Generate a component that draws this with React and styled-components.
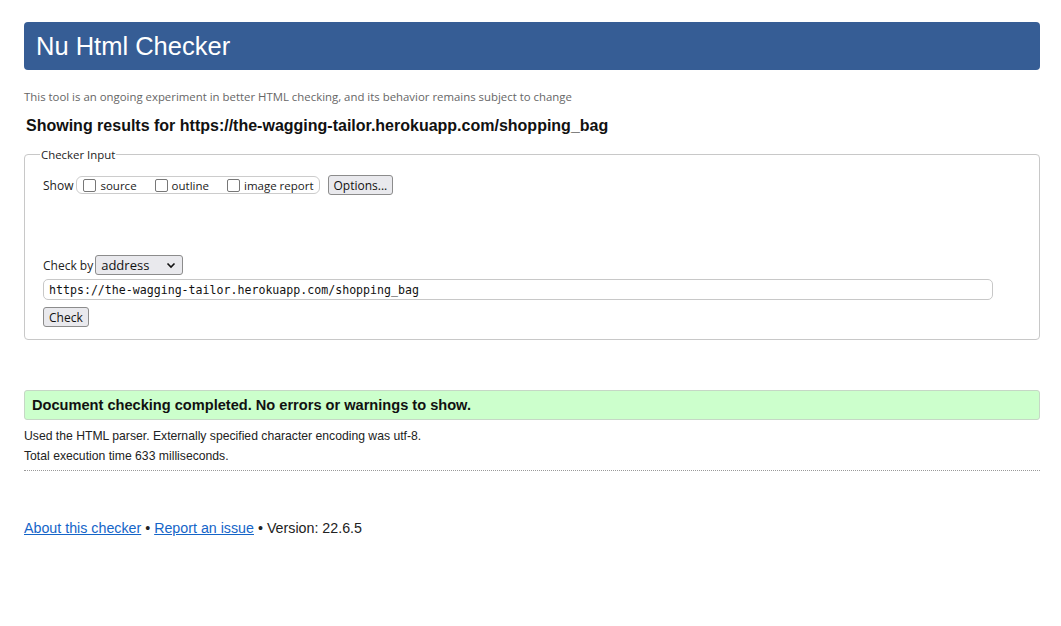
import React from 'react'
import styled, { createGlobalStyle } from 'styled-components'

const Global = createGlobalStyle`
    html, body {
        margin: 0;
        padding: 0;
        background: #fff;
        font-family: "Liberation Sans", Arial, sans-serif;
        color: #222;
    }
`
const Page = styled.div`
    padding: 22px 21px 40px 24px;
`
const Header = styled.h1`
    margin: 0;
    height: 48px;
    display: flex;
    align-items: center;
    padding: 0 12px;
    background-color: #365d95;
    border-radius: 4px;
    color: #fff;
    font-size: 25.5px;
    font-weight: 400;
`
const Note = styled.p`
    margin: 19px 0 0 0;
    font-family: "Open Sans", sans-serif;
    font-size: 11.4px;
    color: #666;
`
const Results = styled.h2`
    margin: 13px 0 0 2px;
    font-size: 16px;
    font-weight: 700;
    color: #111;
`
const Fieldset = styled.fieldset`
    margin: 12px 0 0 0;
    padding: 3px 18px 12px 18px;
    border: 1px solid #c8c8c8;
    border-radius: 4px;
    font-family: "Open Sans", sans-serif;
    font-size: 12px;
    color: #222;
`
const Legend = styled.legend`
    padding: 0 1px;
    margin-left: -3px;
    font-size: 11.4px;
`
const Row = styled.div`
    display: flex;
    align-items: center;
    margin-top: ${({top}) => top || 0}px;
`
const Group = styled.span`
    display: inline-flex;
    align-items: center;
    height: 16px;
    padding: 0 5px 0 6px;
    margin-left: 3px;
    border: 1px solid #ccc;
    border-radius: 6px;
    font-size: 11.5px;
`
const Check = styled.label`
    display: inline-flex;
    align-items: center;
    margin-right: ${({last}) => last ? 0 : 18}px;
`
const Box = styled.span`
    width: 11px;
    height: 11px;
    border: 1px solid #777;
    border-radius: 2px;
    background: #fff;
    margin-right: 4px;
`
const Button = styled.button`
    height: 20px;
    padding: 0 5px;
    border: 1px solid #8c8c8c;
    border-radius: 3px;
    background: #e9e9ed;
    font-family: "Open Sans", sans-serif;
    font-size: 12px;
    color: #111;
    margin-left: ${({left}) => left || 0}px;
`
const Select = styled.div`
    display: flex;
    align-items: center;
    justify-content: space-between;
    width: 88px;
    height: 20px;
    box-sizing: border-box;
    padding: 0 6px 0 5px;
    margin-left: 2px;
    border: 1px solid #8c8c8c;
    border-radius: 3px;
    background: #e9e9ed;
    font-size: 13px;
    color: #111;
`
const UrlInput = styled.div`
    margin-top: 4px;
    width: 950px;
    height: 21px;
    box-sizing: border-box;
    display: flex;
    align-items: center;
    padding: 0 5px;
    border: 1px solid #c8c8c8;
    border-radius: 5px;
    font-family: "DejaVu Sans Mono", "Liberation Mono", monospace;
    font-size: 11.6px;
    color: #111;
`
const Success = styled.div`
    margin-top: 50px;
    height: 28px;
    display: flex;
    align-items: center;
    padding: 0 7px;
    background: #ccffcc;
    border: 1px solid #c6d7c6;
    border-radius: 3px;
    font-size: 14.6px;
    font-weight: 700;
    color: #111;
`
const Detail = styled.p`
    margin: ${({top}) => top}px 0 0 0;
    font-size: 12.2px;
    line-height: 14px;
    color: #222;
`
const Rule = styled.hr`
    margin: 7px 0 0 0;
    border: none;
    border-top: 1px dotted #999;
`
const Footer = styled.p`
    margin: 49px 0 0 0;
    font-size: 14.25px;
    color: #222;
`
const A = styled.a`
    color: #1565c8;
    text-decoration: underline;
`

export default function App() {
    return (
        <Page>
            <Global />
            <Header>Nu Html Checker</Header>
            <Note>This tool is an ongoing experiment in better HTML checking, and its behavior remains subject to change</Note>
            <Results>Showing results for https://the-wagging-tailor.herokuapp.com/shopping_bag</Results>
            <Fieldset>
                <Legend>Checker Input</Legend>
                <Row top={10}>
                    <span>Show</span>
                    <Group>
                        <Check><Box />source</Check>
                        <Check><Box />outline</Check>
                        <Check last><Box />image report</Check>
                    </Group>
                    <Button left={8}>Options...</Button>
                </Row>
                <Row top={60}>
                    <span>Check by</span>
                    <Select>
                        <span>address</span>
                        <svg width="10" height="7" viewBox="0 0 10 7"><path d="M1.5 1.5 L5 5 L8.5 1.5" stroke="#111" strokeWidth="1.6" fill="none" /></svg>
                    </Select>
                </Row>
                <UrlInput>https://the-wagging-tailor.herokuapp.com/shopping_bag</UrlInput>
                <Row top={7}>
                    <Button>Check</Button>
                </Row>
            </Fieldset>
            <Success>Document checking completed. No errors or warnings to show.</Success>
            <Detail top={9}>Used the HTML parser. Externally specified character encoding was utf-8.</Detail>
            <Detail top={6}>Total execution time 633 milliseconds.</Detail>
            <Rule />
            <Footer>
                <A href="#">About this checker</A> • <A href="#">Report an issue</A> • Version: 22.6.5
            </Footer>
        </Page>
    )
}
